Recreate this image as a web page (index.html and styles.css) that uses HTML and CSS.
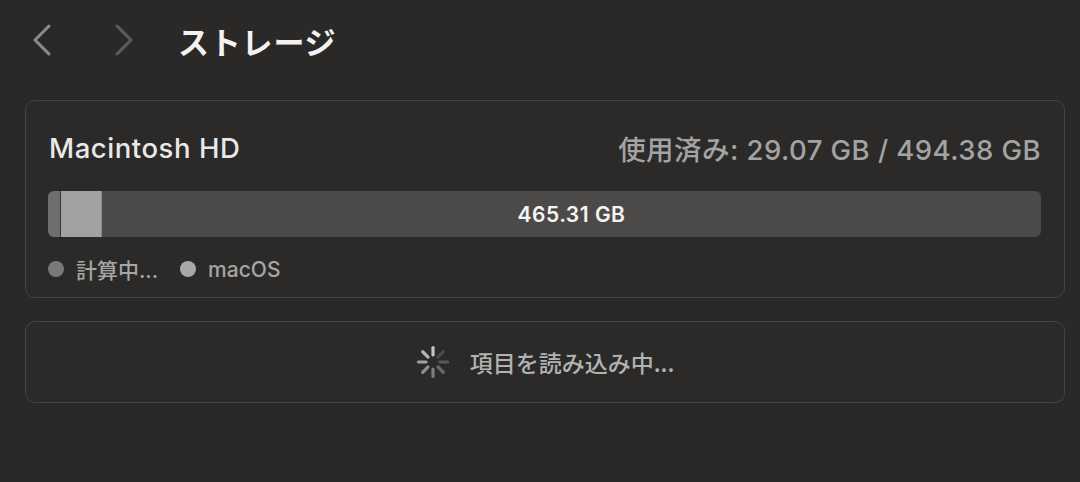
FILE: index.html
```html
<!DOCTYPE html>
<html lang="ja">
<head>
<meta charset="utf-8">
<link rel="stylesheet" href="styles.css">
</head>
<body>
<header class="toolbar">
  <svg class="nav nav-back" width="24" height="34" viewBox="0 0 24 34"><path d="M19 3 L5 17 L19 31" fill="none" stroke="currentColor" stroke-width="3" stroke-linecap="round" stroke-linejoin="round"/></svg>
  <svg class="nav nav-fwd" width="24" height="34" viewBox="0 0 24 34"><path d="M5 3 L19 17 L5 31" fill="none" stroke="currentColor" stroke-width="3" stroke-linecap="round" stroke-linejoin="round"/></svg>
  <h1 class="title">ストレージ</h1>
</header>
<main class="content">
  <section class="card disk">
    <div class="disk-head">
      <span class="disk-name">Macintosh HD</span>
      <span class="disk-used">使用済み: 29.07 GB / 494.38 GB</span>
    </div>
    <div class="bar">
      <div class="seg seg-calc"></div>
      <div class="seg seg-os"></div>
      <div class="seg seg-free">465.31 GB</div>
    </div>
    <div class="legend">
      <span class="legend-item"><i class="dot dot-calc"></i>計算中...</span>
      <span class="legend-item"><i class="dot dot-os"></i>macOS</span>
    </div>
  </section>
  <section class="card loading">
    <svg class="spinner" width="34" height="34" viewBox="-17 -17 34 34">
      <g stroke-width="3.2" stroke-linecap="round">
        <line x1="0" y1="-7" x2="0" y2="-14.5" stroke="#c4c4c4"/>
        <line x1="0" y1="-7" x2="0" y2="-14.5" stroke="#4a4a4a" transform="rotate(45)"/>
        <line x1="0" y1="-7" x2="0" y2="-14.5" stroke="#5a5a5a" transform="rotate(90)"/>
        <line x1="0" y1="-7" x2="0" y2="-14.5" stroke="#6a6a6a" transform="rotate(135)"/>
        <line x1="0" y1="-7" x2="0" y2="-14.5" stroke="#7c7c7c" transform="rotate(180)"/>
        <line x1="0" y1="-7" x2="0" y2="-14.5" stroke="#8e8e8e" transform="rotate(225)"/>
        <line x1="0" y1="-7" x2="0" y2="-14.5" stroke="#a2a2a2" transform="rotate(270)"/>
        <line x1="0" y1="-7" x2="0" y2="-14.5" stroke="#b4b4b4" transform="rotate(315)"/>
      </g>
    </svg>
    <span class="loading-text">項目を読み込み中...</span>
  </section>
</main>
</body>
</html>
```

FILE: styles.css
```css
* { box-sizing: border-box; }
html, body {
  margin: 0;
  background: #2a2928;
  width: 1080px;
  height: 482px;
  overflow: hidden;
  font-family: Inter, "Noto Sans CJK JP", sans-serif;
}
.toolbar {
  display: flex;
  align-items: center;
  height: 80px;
  padding-left: 30px;
}
.nav { display: block; }
.nav-back { color: #8c8b8a; }
.nav-fwd { color: #5e5d5c; margin-left: 58px; }
.title {
  margin: 0 0 0 42px;
  font-family: "Noto Sans CJK JP", sans-serif;
  font-weight: 700;
  font-size: 31px;
  color: #f2f2f2;
  letter-spacing: 0.8px;
}
.content {
  display: flex;
  flex-direction: column;
  gap: 23px;
  padding: 20px 15px 0 25px;
}
.card {
  border: 1px solid #454443;
  border-radius: 10px;
  background: #2b2a29;
}
.disk {
  padding: 29px 23px 16px 22px;
}
.disk-head {
  display: flex;
  justify-content: space-between;
  align-items: center;
  height: 36px;
}
.disk-name {
  font-size: 27.5px;
  font-weight: 500;
  letter-spacing: 0.55px;
  color: #e8e8e8;
  padding-left: 1px;
}
.disk-used {
  font-size: 27.5px;
  font-weight: 500;
  letter-spacing: 0.45px;
  color: #a3a3a3;
}
.bar {
  display: flex;
  margin-top: 25px;
  height: 46px;
  border-radius: 6px;
  overflow: hidden;
  background: #4b4a49;
}
.seg-calc { width: 13px; background: #6f6e6d; border-right: 1px solid #3a3938; }
.seg-os { width: 41px; background: #a2a2a2; border-right: 1px solid #8a8a8a; }
.seg-free {
  flex: 1;
  display: flex;
  align-items: center;
  justify-content: center;
  font-size: 21px;
  font-weight: 600;
  letter-spacing: 0.5px;
  color: #f4f4f4;
}
.legend {
  display: flex;
  align-items: center;
  gap: 22px;
  margin-top: 20px;
  height: 24px;
}
.legend-item {
  display: flex;
  align-items: center;
  gap: 12px;
  font-size: 21px;
  font-weight: 500;
  color: #a5a5a5;
}
.dot {
  width: 16px;
  height: 16px;
  border-radius: 50%;
  display: inline-block;
}
.dot-calc { background: #7a7978; }
.dot-os { background: #a8a8a8; }
.loading {
  display: flex;
  align-items: center;
  justify-content: center;
  gap: 20px;
  height: 82px;
}
.spinner { display: block; }
.loading-text {
  font-family: "Noto Sans CJK JP", sans-serif;
  font-size: 23px;
  font-weight: 500;
  color: #b2b2b2;
}
```
